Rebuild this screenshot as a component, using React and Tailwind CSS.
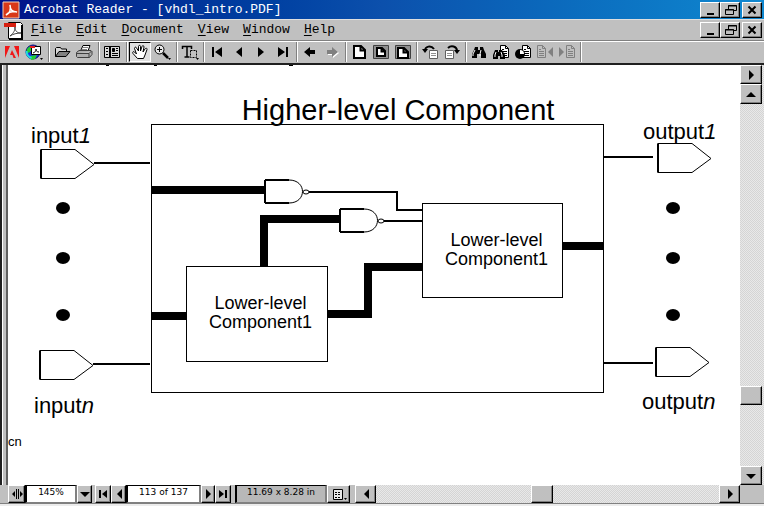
import clsx from 'clsx';

const raised = 'border border-t-white border-l-white border-r-black border-b-black bg-[#c0c0c0] shadow-[inset_-1px_-1px_0_#808080]';
const dither = 'bg-[repeating-conic-gradient(#d4d4d4_0_25%,#e8e8e8_0_50%)] bg-[length:2px_2px]';

const menus = ['File', 'Edit', 'Document', 'View', 'Window', 'Help'];

const Icon = ({ size = 18, children }) => (
  <svg
    width={size}
    height={size}
    viewBox={`0 0 ${size} ${size}`}
    fill="none"
    stroke="black"
    className="shrink-0"
    aria-hidden="true"
  >
    {children}
  </svg>
);

// Small solid triangle used by the scrollbars and page controls
const Arrow = ({ dir }) => {
  const shapes = {
    left: 'M11 3v10L6 8z',
    right: 'M6 3v10l5-5z',
    up: 'M3 11h10L8 6z',
    down: 'M3 6h10l-5 5z',
    first: 'M4 4h2v8H4zM12 4v8L7 8z',
    last: 'M10 4h2v8h-2zM4 4v8l5-4z',
    split: 'M7 3h1v10H7zM9 3h1v10H9zM6 5v6L3 8zM11 5v6l3-3z',
  };
  return (
    <Icon size={16}>
      <path d={shapes[dir]} fill="black" stroke="none" />
    </Icon>
  );
};

const BarButton = ({ label, className, children }) => (
  <button
    type="button"
    aria-label={label}
    className={clsx('flex shrink-0 items-center justify-center overflow-hidden', raised, className)}
  >
    {children}
  </button>
);

const WindowButtons = ({ target }) => (
  <div className="ml-auto flex pr-0.5">
    <BarButton label={`Minimize ${target}`} className="h-4 w-5">
      <Icon size={16}>
        <path d="M5 12h7" strokeWidth="2" />
      </Icon>
    </BarButton>
    <BarButton label={`Restore ${target}`} className="h-4 w-5">
      <Icon size={16}>
        <path d="M6.5 8V3.5h8v5H12M6 4h9" />
        <path d="M3.5 7.5h8v5h-8zM3 8h9" />
      </Icon>
    </BarButton>
    <BarButton label={`Close ${target}`} className="ml-0.5 h-4 w-5">
      <Icon size={16}>
        <path d="M4.5 4.5l7 7M11.5 4.5l-7 7" strokeWidth="2" />
      </Icon>
    </BarButton>
  </div>
);

const Separator = ({ wide }) => (
  <span className={clsx('mr-px h-5 shrink-0 border-l border-l-[#808080]', wide ? 'ml-[3px] w-0.5' : 'ml-0.5 w-0.5')}>
    <span className="block h-full w-px bg-white" />
  </span>
);

const SheetLines = ({ color = 'black' }) => (
  <g stroke={color}>
    <path d="M8.5 2.5h5l3 3v9h-8z" fill={color === 'black' ? 'white' : '#c0c0c0'} />
    <path d="M13.5 2.5v3h3M10 6.5h2M10 8.5h5M10 10.5h5M10 12.5h5" />
  </g>
);

const Binoculars = () => (
  <g fill="black" stroke="none">
    <path d="M5 4h3v3h2V4h3l1 3 2 4v4h-5v-4H7v4H2v-4l2-4z" />
    <path d="M5 7L3 11v2M11 7l-1 4v2" stroke="white" strokeWidth="1" fill="none" />
  </g>
);

const tools = [
  [
    {
      label: 'Adobe home page',
      icon: <path d="M2 3h5L2 15zM16 3h-5l5 12zM9 7l4 8h-2.5l-1-3H7z" fill="#f01818" stroke="none" />,
    },
    {
      label: 'Open web page',
      icon: (
        <>
          <circle cx="8" cy="9" r="7" fill="#1830e0" stroke="#101070" />
          <path d="M2 6c3-4 5-3 6-1l-3 4-4 2zM5 13l7-1-2 4-4 1z" fill="#20d030" stroke="none" />
          <path d="M1.5 8c0 4 2 6 5 7" stroke="#20d8e8" strokeWidth="2" />
          <path d="M6.5 3.5h9v8h-9z" fill="white" />
          <path d="M5 3h5v2H5z" fill="#e02020" stroke="none" />
          <path d="M8 10c3-1 3-3 3-4 0 2 1 3 3 3" />
          <path d="M15 15h3l-1.5 2z" fill="black" stroke="none" />
        </>
      ),
    },
  ],
  [
    {
      label: 'Open',
      icon: (
        <>
          <path d="M2.5 13.5v-8l1-1h4l1 1.5h5v2.5" fill="#d8d8d8" />
          <path d="M2.5 13.5L6 8.5h11l-4 5z" fill="#808080" />
        </>
      ),
    },
    {
      label: 'Print',
      icon: (
        <>
          <path d="M5.5 8l2.5-5.5h7L13 8" fill="white" />
          <path d="M1.5 9.5L4 7.5h12l1 1v3l-2.5 3h-12l-1-1zM2 10.5h12l2.5-2.5M14 10.5v4" fill="#b0b0b0" stroke="#404040" />
          <path d="M8 4.5h5M7 6.5h5" stroke="#808080" />
        </>
      ),
    },
  ],
  [
    {
      label: 'Show navigation pane',
      icon: (
        <>
          <path d="M1.5 3.5h15v11h-15z" fill="#d8d8d8" />
          <path d="M7 3v12" strokeWidth="2" />
          <path d="M3 5.5h2M3 8.5h2M3 11.5h2M9 10.5h6M9 12.5h6M13 5.5h2M13 7.5h2" />
          <path d="M9.5 5.5h2v3h-2z" fill="black" />
        </>
      ),
    },
  ],
  [
    {
      label: 'Hand',
      pressed: true,
      icon: (
        <path
          d="M6.5 15.5L2 10.5c-1-1.500.5-2.500 1.500-1.500L5.500 11 3.500 5.500c0-1.500 1.500-2 2-.5L7.500 8V3.500c0-1.500 2-1.500 2 0V8l1.500-4.500c.5-1.500 2-1 2 .5L12 9l2-3c1-1.500 2.500-.5 2 .5L14 12l-1.500 3.500z"
          fill="white"
        />
      ),
    },
    {
      label: 'Zoom in',
      icon: (
        <>
          <circle cx="6.5" cy="6.5" r="4.5" fill="#e8e8e8" />
          <path d="M4 6.5h5M6.5 4v5" />
          <path d="M10 10l5 5" strokeWidth="2.5" />
          <path d="M15 15h3l-1.5 2z" fill="black" stroke="none" />
        </>
      ),
    },
  ],
  [
    {
      label: 'Text select',
      icon: (
        <>
          <path d="M1.5 6V3.5h9V6M6 3v11M3.5 14h5" strokeWidth="1.5" />
          <path d="M9.5 7.5h6v7h-6z" strokeDasharray="2 1" />
          <path d="M15 15h3l-1.5 2z" fill="black" stroke="none" />
        </>
      ),
    },
  ],
  [
    { label: 'First page', icon: <path d="M4 4h2v10H4zM14 4v10L7 9z" fill="black" stroke="none" /> },
    { label: 'Previous page', icon: <path d="M12 4v10L6 9z" fill="black" stroke="none" /> },
    { label: 'Next page', icon: <path d="M6 4v10l6-5z" fill="black" stroke="none" /> },
    { label: 'Last page', icon: <path d="M12 4h2v10h-2zM4 4v10l7-5z" fill="black" stroke="none" /> },
  ],
  [
    { label: 'Go back', icon: <path d="M3 9l6-5v3h5v4H9v3z" fill="black" stroke="none" /> },
    {
      label: 'Go forward',
      icon: (
        <>
          <path d="M16 10l-6 5v-3H5v-4h5V5z" fill="white" stroke="none" />
          <path d="M15 9L9 14v-3H4V7h5V4z" fill="#808080" stroke="none" />
        </>
      ),
    },
  ],
  [
    {
      label: 'Actual size',
      icon: <path d="M4 3h7l4 4v8H4zM10.5 3v4.500H15" fill="white" strokeWidth="2" />,
    },
    {
      label: 'Fit in window',
      icon: (
        <>
          <path d="M1.5 2.5h15v13h-15z" fill="#909090" stroke="#404040" />
          <path d="M5 5h5l3 3v5H5zM9.5 5v3.500H13" fill="white" strokeWidth="2" />
        </>
      ),
    },
    {
      label: 'Fit width',
      icon: (
        <>
          <path d="M1.5 15.5v-13h15v13z" fill="#909090" stroke="#404040" />
          <path d="M4 15V5h6l4 4v6zM9.5 5v4.500H14" fill="white" strokeWidth="2" />
        </>
      ),
    },
  ],
  [
    {
      label: 'Rotate left',
      icon: (
        <>
          <path d="M8.5 15.5v-8h8v8z" fill="white" stroke="#606060" />
          <path d="M10 12.5h5M10 10.5h5" stroke="#909090" />
          <path d="M4 8c0-5 6-6 9-2" strokeWidth="2" />
          <path d="M1 6h6l-3 4z" fill="black" stroke="none" />
        </>
      ),
    },
    {
      label: 'Rotate right',
      icon: (
        <>
          <path d="M2.5 7.5h8v8h-8z" fill="white" stroke="#606060" />
          <path d="M4 12.5h5M4 10.5h5" stroke="#909090" />
          <path d="M5 5c3-3 9-2 9 3" strokeWidth="2" />
          <path d="M11 7h6l-3 4z" fill="black" stroke="none" />
        </>
      ),
    },
  ],
  [
    { label: 'Find', icon: <Binoculars /> },
    {
      label: 'Search',
      icon: (
        <>
          <SheetLines />
          <path d="M3 7h3v2h1V7h3l3 5v4H8v-3H6v3H1v-4z" fill="black" stroke="none" />
          <path d="M4 9l-1 3v2M9 9l1 3v2" stroke="white" />
        </>
      ),
    },
    {
      label: 'Search results',
      icon: (
        <>
          <SheetLines />
          <circle cx="6" cy="11" r="5" fill="black" stroke="none" />
          <path d="M6 11V7a4 4 0 0 1 4 4z" fill="white" stroke="none" />
        </>
      ),
    },
    {
      label: 'Previous result',
      icon: (
        <>
          <g transform="translate(-7 0)">
            <SheetLines color="#808080" />
          </g>
          <path d="M17 4v10l-5-5z" fill="#808080" stroke="none" />
        </>
      ),
    },
    {
      label: 'Next result',
      icon: (
        <>
          <SheetLines color="#808080" />
          <path d="M1 4v10l5-5z" fill="#808080" stroke="none" />
        </>
      ),
    },
  ],
];

const TitleBar = () => (
  <header className="flex h-[19px] items-center bg-linear-to-r from-[#001088] via-[#0c50ac] to-[#1088d0] pl-0.5 text-white">
    <Icon size={18}>
      <path d="M1 1h16v16H1z" fill="#d83818" stroke="#f0d0b8" />
      <path d="M4 14c4-2 5-6 4-10 0 5 3 7 7 7-4-1-8 0-11 3z" stroke="white" strokeWidth="1.5" />
    </Icon>
    <h1 className="ml-1 text-[13px] leading-4 whitespace-pre">Acrobat Reader - [vhdl_intro.PDF]</h1>
    <WindowButtons target="window" />
  </header>
);

const MenuBar = () => (
  <nav className="flex h-[21px] items-center border-t border-t-[#dfdfdf] bg-[#c0c0c0] pl-1 text-black">
    <Icon size={20}>
      <path d="M4.5 2.5h12l2 2v14h-14z" fill="white" />
      <path d="M18 5v14H5" strokeWidth="2" />
      <path d="M0 3h12v4H0z" fill="#d82010" stroke="none" />
      <path d="M6 16c4-3 5-6 5-9 0 4 2 6 6 6-4 0-8 1-11 3z" stroke="#404040" />
    </Icon>
    <div className="ml-[7px] flex gap-3.5">
      {menus.map((name) => (
        <button key={name} type="button" className="text-[13px] leading-4">
          <span className="underline underline-offset-2">{name[0]}</span>
          {name.slice(1)}
        </button>
      ))}
    </div>
    <WindowButtons target="document" />
  </nav>
);

const Toolbar = () => (
  <div
    role="toolbar"
    aria-label="Tools"
    className="flex h-[25px] items-center border-t border-b-2 border-t-[#808080] border-b-[#202020] bg-[#c0c0c0] pl-px shadow-[inset_0_1px_0_white]"
  >
    {tools.map((group, i) => (
      <div key={group[0].label} className="flex items-center">
        {group.map((tool) => (
          <button
            key={tool.label}
            type="button"
            aria-label={tool.label}
            className={clsx(
              'flex h-5 w-[22px] items-center justify-center',
              tool.pressed && 'border border-t-black border-l-black border-r-white border-b-white bg-[#e0e0e0]'
            )}
          >
            <Icon>{tool.icon}</Icon>
          </button>
        ))}
        <Separator wide={i < 4} />
      </div>
    ))}
  </div>
);

const Gate = ({ x, y }) => (
  <g fill="white" strokeWidth="1">
    <path d={`M${x} ${y}h24c18 0 18 23 0 23h-24z`} />
    <path d={`M${x} ${y}v23M${x} ${y}h24M${x} ${y + 23}h24`} strokeWidth="2" />
    <ellipse cx={x + 41} cy={y + 12} rx="3" ry="2" />
  </g>
);

const Port = ({ x, y }) => (
  <g fill="white">
    <path d={`M${x} ${y}h34l19 15-19 14h-34z`} />
    <path d={`M${x} ${y}v29`} strokeWidth="2" />
  </g>
);

const Block = ({ x, y, w, h, lines }) => (
  <g>
    <rect x={x} y={y} width={w} height={h} fill="white" />
    <text textAnchor="middle" fontSize="18" fill="black" stroke="none">
      <tspan x={x + 74} y={y + 42}>{lines[0]}</tspan>
      <tspan x={x + 74} y={y + 61}>{lines[1]}</tspan>
    </text>
  </g>
);

const Label = ({ x, y, text, suffix }) => (
  <text x={x} y={y} fontSize="22" fill="black" stroke="none">
    {text}
    <tspan fontStyle="italic">{suffix}</tspan>
  </text>
);

const Diagram = () => (
  <svg
    viewBox="8 65 732 420"
    className="block h-auto w-full bg-white font-['Liberation_Sans',sans-serif]"
    fill="none"
    stroke="black"
    role="img"
    aria-label="Higher-level component block diagram"
  >
    {/* descenders of the line scrolled off above */}
    <path d="M106 65h3M154 65h3M289 65h4" strokeWidth="2" />

    <text x="398" y="120" textAnchor="middle" fontSize="29" fill="black" stroke="none">
      Higher-level Component
    </text>
    <rect x="151.5" y="124.5" width="452" height="268" />

    <Label x={31} y={143} text="input" suffix="1" />
    <Label x={34} y={413} text="input" suffix="n" />
    <Label x={643} y={139} text="output" suffix="1" />
    <Label x={642} y={409} text="output" suffix="n" />
    <text x="8" y="446" fontSize="13" fill="black" stroke="none">cn</text>

    <Port x={41} y={149.5} />
    <Port x={40} y={350.5} />
    <Port x={658} y={143.5} />
    <Port x={656} y={347.5} />
    <path d="M94 163h56M93 364h57M604 157h49M604 363h49" strokeWidth="2" />

    {[63, 673].map((cx) =>
      [208, 258, 315].map((cy) => (
        <ellipse key={`${cx}-${cy}`} cx={cx} cy={cy} rx="7" ry="6" fill="black" stroke="none" />
      ))
    )}

    {/* buses */}
    <path d="M152 190h112M264 267v-48h76M152 316h35M327 314h41v-47h55M563 246h41" strokeWidth="8" />
    <path d="M309 192h88v18h26M383 221h40" strokeWidth="2" />

    <Gate x={265} y={180} />
    <Gate x={340} y={209} />
    <Block x={186.5} y={266.5} w={141} h={95} lines={['Lower-level', 'Component1']} />
    <Block x={422.5} y={203.5} w={140} h={94} lines={['Lower-level', 'Component1']} />
  </svg>
);

const VerticalScroll = () => (
  <div className={clsx('flex w-6 shrink-0 flex-col pr-0.5', dither)}>
    <BarButton label="Panel menu" className="h-[19px]"><Arrow dir="right" /></BarButton>
    <BarButton label="Scroll up" className="h-5"><Arrow dir="up" /></BarButton>
    <div className="flex grow flex-col">
      <div className="grow-[282]" />
      <BarButton label="Vertical scroll thumb" className="h-[19px]" />
      <div className="grow-[61]" />
    </div>
    <BarButton label="Scroll down" className="h-[19px]"><Arrow dir="down" /></BarButton>
  </div>
);

const field = 'h-[18px] border-x-2 border-t border-b border-t-black border-l-black border-r-[#808080] border-b-[#808080] text-center text-[9px] leading-3 text-black';

const StatusBar = () => (
  <footer className="flex h-[19px] items-start border-b border-b-[#808080] bg-[#c0c0c0] pl-2 font-['DejaVu_Sans',sans-serif]">
    <BarButton label="Resize panes" className="h-[18px] w-[17px]"><Arrow dir="split" /></BarButton>
    <input aria-label="Zoom level" defaultValue="145%" className={clsx(field, 'w-[52px] bg-white pb-1')} />
    <BarButton label="Choose zoom" className="h-[18px] w-[15px]"><Arrow dir="down" /></BarButton>
    <BarButton label="First page" className="ml-[3px] h-[18px] w-4"><Arrow dir="first" /></BarButton>
    <BarButton label="Previous page" className="h-[18px] w-[15px]"><Arrow dir="left" /></BarButton>
    <input aria-label="Page" defaultValue="113 of 137" className={clsx(field, 'w-[75px] bg-white pb-1')} />
    <BarButton label="Next page" className="h-[18px] w-[14px]"><Arrow dir="right" /></BarButton>
    <BarButton label="Last page" className="h-[18px] w-4"><Arrow dir="last" /></BarButton>
    <output className={clsx(field, 'ml-1 w-[92px] shrink-0 bg-[#b8b8b8]')}>11.69 x 8.28 in</output>
    <BarButton label="Page layout" className="h-[18px] w-[23px]">
      <Icon size={18}>
        <path d="M3.5 4.5h9v10h-9z" fill="#e8e8e8" />
        <path d="M5 7.5h6M5 9.5h6M5 12.5h6" strokeDasharray="2 1" />
        <path d="M14 13h3l-1.5 2z" fill="black" stroke="none" />
      </Icon>
    </BarButton>
    <div className={clsx('ml-[5px] flex h-[18px] grow', dither)}>
      <BarButton label="Scroll left" className="w-[21px]"><Arrow dir="left" /></BarButton>
      <div className="grow-[155]" />
      <BarButton label="Horizontal scroll thumb" className="w-[22px]" />
      <div className="grow-[166]" />
      <BarButton label="Scroll right" className="w-[21px]"><Arrow dir="right" /></BarButton>
    </div>
    <div className="w-6 shrink-0" />
  </footer>
);

export default function App() {
  return (
    <div className="min-h-screen bg-[#ececec] font-['Liberation_Mono',monospace]">
      <TitleBar />
      <MenuBar />
      <Toolbar />
      <main className="flex bg-white">
        <div className="w-2 shrink-0 border-r-2 border-l-2 border-r-[#606060] border-l-[#202020] bg-[#c0c0c0] shadow-[inset_1px_0_0_white]" />
        <div className="min-w-0 grow">
          <Diagram />
        </div>
        <VerticalScroll />
      </main>
      <StatusBar />
    </div>
  );
}
